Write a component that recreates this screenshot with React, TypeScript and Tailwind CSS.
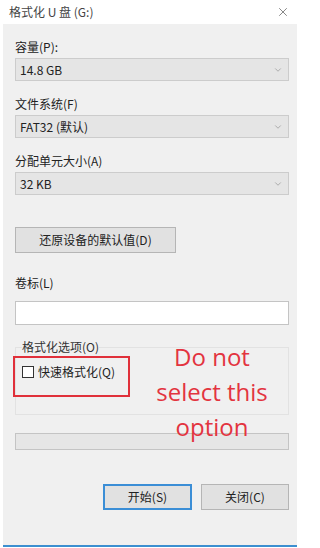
import { X, ChevronDown } from "lucide-react";

function Select({ value }: { value: string }) {
  return (
    <div className="mt-[3px] h-[23px] flex items-center justify-between border border-[#cccccc] bg-[#e5e5e5] pl-[4px] pr-[5px] text-[12px] text-[#222]">
      <span>{value}</span>
      <ChevronDown className="w-[10px] h-[10px] text-[#888]" strokeWidth={1.5} />
    </div>
  );
}

export default function App() {
  return (
    <div className="relative w-[300px] h-[548px] bg-white overflow-hidden font-['Noto_Sans_CJK_SC','Noto_Sans',sans-serif] text-[#222]">
      {/* title bar */}
      <div className="h-[24px] flex items-center justify-between pl-[9px] pr-[10px]">
        <span className="text-[12px] text-[#444]">格式化 U 盘 (G:)</span>
        <X className="w-[14px] h-[14px] text-[#555]" strokeWidth={1.2} />
      </div>

      {/* dialog body */}
      <div className="mx-[3px] h-[521px] bg-[#f0f0f0] pl-[12px] pr-[8px] pt-[15px] text-[12px]">
        <div className="leading-[16px]">容量(P):</div>
        <Select value="14.8 GB" />

        <div className="mt-[15px] leading-[16px]">文件系统(F)</div>
        <Select value="FAT32 (默认)" />

        <div className="mt-[15px] leading-[16px]">分配单元大小(A)</div>
        <Select value="32 KB" />

        <button className="mt-[32px] w-[161px] h-[26px] border border-[#b5b5b5] bg-[#e1e1e1] text-[12px] text-[#222]">
          还原设备的默认值(D)
        </button>

        <div className="mt-[22px] leading-[16px]">卷标(L)</div>
        <div className="mt-[10px] h-[24px] border border-[#c4c4c4] bg-white" />

        <fieldset className="mt-[14px] h-[76px] border border-[#e2e2e2] px-[6px]">
          <legend className="text-[12px] leading-[16px] text-[#333]">格式化选项(O)</legend>
          <label className="mt-[8px] flex items-center gap-[4px] text-[12px]">
            <span className="w-[12px] h-[12px] border border-[#333] bg-white" />
            快速格式化(Q)
          </label>
        </fieldset>

        <div className="mt-[18px] h-[17px] border border-[#c4c4c4] bg-[#e6e6e6]" />

        <div className="mt-[34px] flex justify-end gap-[9px]">
          <button className="w-[89px] h-[26px] border-2 border-[#3b8ed6] bg-[#e1e1e1] text-[12px] text-[#222]">
            开始(S)
          </button>
          <button className="w-[88px] h-[26px] border border-[#b5b5b5] bg-[#e1e1e1] text-[12px] text-[#222]">
            关闭(C)
          </button>
        </div>
      </div>
      <div className="mx-[3px] h-[2px] bg-[#3c8fd0]" />

      {/* annotation */}
      <div className="absolute left-[13px] top-[356px] w-[117px] h-[41px] border-2 border-[#e0303a]" />
      <div className="absolute left-[142px] top-[339px] w-[140px] text-center text-[24px] leading-[35px] text-[#e3343f] font-['Open_Sans',sans-serif]">
        Do not
        <br />
        select this
        <br />
        option
      </div>
    </div>
  );
}
